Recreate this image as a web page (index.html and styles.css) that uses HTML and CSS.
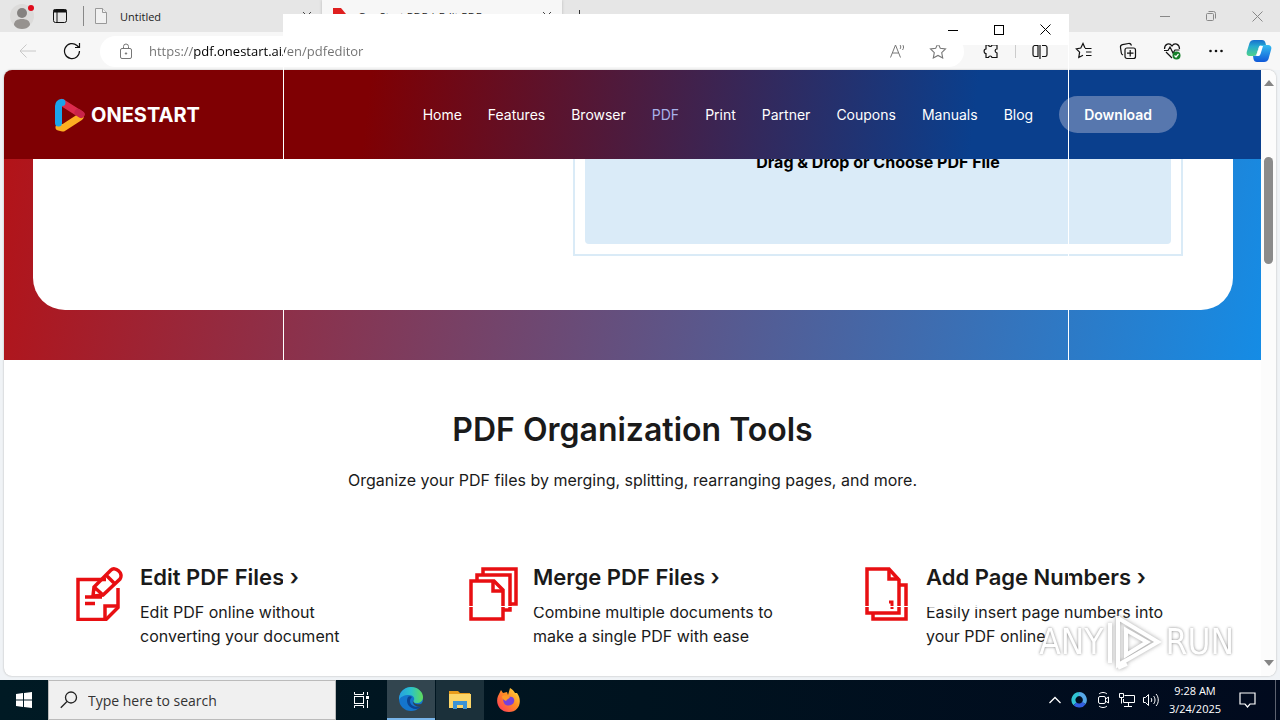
FILE: index.html
```html
<!DOCTYPE html>
<html lang="en">
<head>
    <meta charset="UTF-8">
    <meta name="viewport" content="width=device-width, initial-scale=1.0">
    <title>OneStart PDF | Edit PDF</title>
    <link rel="stylesheet" href="styles.css">
</head>
<body>
    <!-- Tab strip -->
    <div class="tab-strip">
        <button class="profile" aria-label="Profile">
            <svg width="26" height="26" viewBox="0 0 26 26"><circle cx="13" cy="13" r="12" fill="#dcdbda"/><circle cx="13" cy="10" r="5" fill="#858280"/><path d="M5 22c0-4 3-6 8-6s8 2 8 6c-2 3-5 4-8 4s-6-1-8-4z" fill="#96928f"/><circle cx="22" cy="5" r="3" fill="#e00b1c"/></svg>
        </button>
        <button class="workspaces" aria-label="Tab actions">
            <svg width="16" height="16" viewBox="0 0 16 16" fill="none" stroke="#111"><rect x="1.500" y="1.500" width="13" height="13" rx="2"/><path d="M1.500 3h13" stroke-width="3"/><path d="M5 4v10"/></svg>
        </button>
        <span class="strip-line"></span>
        <div class="tab">
            <svg width="14" height="18" viewBox="0 0 14 18" fill="#f1f1f1" stroke="#999"><path d="M1.500 1.500h7l4 4v11h-11z"/><path d="M8.500 1.500v4h4"/></svg>
            <span>Untitled</span>
            <button class="tab-close" aria-label="Close tab"><svg width="10" height="10" viewBox="0 0 10 10" stroke="#444"><path d="M1 1l8 8M9 1l-8 8"/></svg></button>
        </div>
        <div class="tab active">
            <svg width="14" height="16" viewBox="0 0 14 16"><path d="M1 0h8l5 6v10H1z" fill="#df1f1f"/></svg>
            <span>OneStart PDF | Edit PDF</span>
            <button class="tab-close" aria-label="Close tab"><svg width="10" height="10" viewBox="0 0 10 10" stroke="#444"><path d="M1 1l8 8M9 1l-8 8"/></svg></button>
        </div>
        <button class="new-tab" aria-label="New tab"><svg width="14" height="14" viewBox="0 0 14 14" stroke="#333"><path d="M7.500 1v13M1 7.500h13"/></svg></button>
        <div class="window-buttons muted">
            <button aria-label="Minimize"><svg width="10" height="10" viewBox="0 0 10 10" stroke="currentColor"><path d="M0 5.500h10"/></svg></button>
            <button aria-label="Restore"><svg width="10" height="10" viewBox="0 0 10 10" fill="none" stroke="currentColor"><rect x=".5" y="2.500" width="7" height="7" rx="1"/><path d="M2.500 .5h5a2 2 0 0 1 2 2v5"/></svg></button>
            <button aria-label="Close"><svg width="11" height="11" viewBox="0 0 11 11" stroke="currentColor"><path d="M.5 .5l10 10M10.500 .5l-10 10"/></svg></button>
        </div>
    </div>

    <!-- Toolbar -->
    <div class="toolbar">
        <button class="nav-button" aria-label="Back"><svg width="18" height="14" viewBox="0 0 18 14" fill="none" stroke="#c8c8c8"><path d="M7.500 .5L1 7l6.500 6.500M1 7h16"/></svg></button>
        <button class="nav-button" aria-label="Refresh"><svg width="18" height="18" viewBox="0 0 18 18" fill="none" stroke="#111" stroke-width="1.200"><path d="M16.500 9A7.500 7.500 0 1 1 14 3.500l2 2M16.500 1v4.500H12"/></svg></button>
        <div class="address-bar">
            <svg width="14" height="16" viewBox="0 0 14 16" fill="none" stroke="#777"><rect x="1.500" y="5.500" width="11" height="10" rx="1.500"/><path d="M4.500 5.500V3.500a2.500 2.500 0 0 1 5 0v2"/><circle cx="7" cy="10.500" r=".7" fill="#555"/></svg>
            <input type="text" class="url" aria-label="Address" value="https://pdf.onestart.ai/en/pdfeditor">
            <button aria-label="Read aloud"><svg width="18" height="16" viewBox="0 0 18 16" fill="none" stroke="#777"><path d="M1.500 14.500L6.500 2l5 12.500M3.300 10h6.500M11 2c1 1 1 3 0 4M13 1c2 2 2 4 .5 6"/></svg></button>
            <button aria-label="Add to favorites"><svg width="18" height="18" viewBox="0 0 18 18" fill="none" stroke="#777" stroke-width="1.100"><path d="M9 1.500l2.300 4.800 5.200.7-3.800 3.600 1 5.400L9 13.400 4.300 16l1-5.400L1.500 7l5.200-.7z"/></svg></button>
        </div>
        <div class="actions">
            <button aria-label="Extensions"><svg width="16" height="16" viewBox="0 0 16 16" fill="none" stroke="#111" stroke-width="1.200"><path d="M3 2h2.500c.5 2 3 2 3.500 0h5v4c-2 0-3 3 0 4v4.500H9c-.5-2-3-2-3.500 0H3V10.500C.5 10.500.5 6 3 6z"/></svg></button>
            <span class="separator"></span>
            <button aria-label="Split screen"><svg width="16" height="16" viewBox="0 0 16 16" fill="none" stroke="#111" stroke-width="1.200"><path d="M6 2.500H2.500a2 2 0 0 0-1.500 2v7a2 2 0 0 0 1.500 2H6zM10 2.500h3.500a2 2 0 0 1 1.500 2v7a2 2 0 0 1-1.500 2H10M8 0v16"/></svg></button>
            <button aria-label="Favorites"><svg width="18" height="18" viewBox="0 0 18 18" fill="none" stroke="#111" stroke-width="1.200"><path d="M10 6L8 1.500 5.800 6l-4.500.8 3.300 3.400-.8 5.300 4.200-2.300M10 6.500h6.500M11 10h5.500M11 13.500h5.500"/></svg></button>
            <button aria-label="Collections"><svg width="18" height="18" viewBox="0 0 18 18" fill="none" stroke="#111" stroke-width="1.200"><rect x="6" y="6" width="10.500" height="10.500" rx="2"/><path d="M11.200 8v6.500M8 11.200h6.500M4 13c-1-.5-1.500-1-1.700-2L1.500 5.500c-.3-1.500.5-2.500 2-2.800l6-1.200c1.500-.2 2.500.5 3 2"/></svg></button>
            <button aria-label="Browser essentials"><svg width="18" height="18" viewBox="0 0 18 18" fill="none" stroke="#111" stroke-width="1.200"><path d="M9 16L3 10M1.500 7c0-5 5-7 7.500-3 2.500-4 7.500-2 7.500 3M1 8.500h4L7 5l3 6 2-3h4.500"/><circle cx="13.500" cy="13.500" r="4" fill="#16802a" stroke="none"/><path d="M11.500 13.500l1.500 1.500 2.500-3" stroke="#fff"/></svg></button>
            <button aria-label="Settings and more"><svg width="16" height="16" viewBox="0 0 16 16" fill="#111"><circle cx="2.500" cy="8" r="1.300"/><circle cx="8" cy="8" r="1.300"/><circle cx="13.500" cy="8" r="1.300"/></svg></button>
            <button class="copilot" aria-label="Copilot">
                <svg width="26" height="24" viewBox="0 0 26 24">
                    <defs>
                        <linearGradient id="copilot-left" x1="0" y1="0" x2="0" y2="1"><stop offset="0" stop-color="#176fce"/><stop offset=".4" stop-color="#26a9cf"/><stop offset="1" stop-color="#4fd28b"/></linearGradient>
                        <linearGradient id="copilot-right" x1="0" y1="0" x2="0" y2="1"><stop offset="0" stop-color="#35bdf0"/><stop offset="1" stop-color="#0f58d8"/></linearGradient>
                    </defs>
                    <path d="M8 1h8c2 0 3 1 3.500 3l.5 2h-4c-2 0-3 1-3.500 3l-1.500 5c-.5 2-1.500 3-3.500 3H4c-3 0-4-2-3-5l2.500-8C4.300 2 5.500 1 8 1z" fill="url(#copilot-left)"/>
                    <path d="M18 23h-7c-2 0-3-1-3.500-3L7 17h1c2 0 3-1 3.500-3L13 9c.5-2 1.500-3 3.500-3H21c4 0 5 2 4 5l-2.500 9c-.8 2-2 3-4.500 3z" fill="url(#copilot-right)"/>
                    <path d="M13.500 7L10 17h2.500c1 0 1.500-1 2-2L17 7z" fill="#fff"/>
                </svg>
            </button>
        </div>
    </div>

    <!-- Web page -->
    <div class="viewport">
        <div class="page">
            <header class="site-header">
                <a href="#" class="logo">
                    <svg width="32" height="34" viewBox="0 0 32 34" fill="none" stroke-width="7" stroke-linecap="round" stroke-linejoin="round">
                        <path d="M8 4.500l19 12" stroke="#dc2b4d"/>
                        <path d="M5 29l4 1 17-11" stroke="#fdae22"/>
                        <path d="M27 16.500l-3-2" stroke="#c9234a"/>
                        <path d="M8 4.500C5.500 4.500 4.500 6 4.500 8v17" stroke="#1ba4ea"/>
                    </svg>
                    <span>ONESTART</span>
                </a>
                <nav class="main-nav">
                    <a href="#">Home</a>
                    <a href="#">Features</a>
                    <a href="#">Browser</a>
                    <a href="#" class="current">PDF</a>
                    <a href="#">Print</a>
                    <a href="#">Partner</a>
                    <a href="#">Coupons</a>
                    <a href="#">Manuals</a>
                    <a href="#">Blog</a>
                    <a href="#" class="download">Download</a>
                </nav>
            </header>

            <section class="hero">
                <div class="hero-card">
                    <div class="drop-frame">
                        <button class="drop-zone">Drag &amp; Drop or Choose PDF File</button>
                    </div>
                </div>
            </section>

            <section class="organize">
                <h2>PDF Organization Tools</h2>
                <p class="intro">Organize your PDF files by merging, splitting, rearranging pages, and more.</p>
                <div class="tools">
                    <article class="tool">
                        <svg width="54" height="54" viewBox="0 0 54 54" fill="none" stroke="#e80f12" stroke-width="3.500">
                            <path d="M33 12.500H5v40h28l12-12V21"/>
                            <path d="M32 52V39h13M12 30h17M12 36.500h10"/>
                            <path d="M20 29l1-9L38 3c4-4 13 3 9 9L30 28l-9 1zM21 20l9 8M33 8l9 9"/>
                        </svg>
                        <div>
                            <h3><a href="#">Edit PDF Files ›</a></h3>
                            <p>Edit PDF online without converting your document</p>
                        </div>
                    </article>
                    <article class="tool">
                        <svg width="54" height="54" viewBox="0 0 54 54" fill="none" stroke="#e80f12" stroke-width="3.500">
                            <path d="M17 8V2h33v35h-7"/>
                            <path d="M11 14V8h33v35h-7"/>
                            <path d="M5 14h23l9 9v29H5z"/>
                            <path d="M27 14v10h10"/>
                        </svg>
                        <div>
                            <h3><a href="#">Merge PDF Files ›</a></h3>
                            <p>Combine multiple documents to make a single PDF with ease</p>
                        </div>
                    </article>
                    <article class="tool">
                        <svg width="54" height="54" viewBox="0 0 54 54" fill="none" stroke="#e80f12" stroke-width="3.500">
                            <path d="M8 2h22l10 11v33H8z"/>
                            <path d="M30 2v10h10M41 18h6v34H14v-6"/>
                            <path d="M30 35h3v7" stroke-width="3"/>
                        </svg>
                        <div>
                            <h3><a href="#">Add Page Numbers ›</a></h3>
                            <p>Easily insert page numbers into your PDF online</p>
                        </div>
                    </article>
                </div>
            </section>
        </div>
        <div class="scrollbar">
            <svg width="10" height="6" viewBox="0 0 10 6" fill="#858585"><path d="M0 6l5-6 5 6z"/></svg>
            <div class="scroll-track"><div class="scroll-thumb"></div></div>
            <svg width="10" height="6" viewBox="0 0 10 6" fill="#858585"><path d="M0 0l5 6 5-6z"/></svg>
        </div>
    </div>

    <!-- Taskbar -->
    <div class="taskbar">
        <button class="start" aria-label="Start"><svg width="16" height="16" viewBox="0 0 16 16" fill="#fff"><path d="M0 2l7-1v6.500H0zM8 1l8-1v7.500H8zM0 8.500h7V15l-7-1zM8 8.500h8V16l-8-1z"/></svg></button>
        <label class="search">
            <svg width="18" height="18" viewBox="0 0 18 18" fill="none" stroke="#222" stroke-width="1.300"><circle cx="11" cy="6.500" r="5.500"/><path d="M7 10.500L.8 16.700"/></svg>
            <input type="text" placeholder="Type here to search" aria-label="Type here to search">
        </label>
        <button class="task" aria-label="Task view"><svg width="18" height="16" viewBox="0 0 18 16" fill="none" stroke="#fff"><path d="M1.500 0v2.500h9V0M1.500 16v-2.500h9V16M14.500 0v3M14.500 8v8"/><rect x="1.500" y="4.500" width="9" height="7"/><path d="M13 5.500h3" stroke-width="3"/></svg></button>
        <button class="task focused" aria-label="Microsoft Edge">
            <svg width="24" height="24" viewBox="0 0 24 24">
                <defs>
                    <linearGradient id="edge-top" x1="0" y1="0" x2="1" y2="0"><stop offset="0" stop-color="#269fe2"/><stop offset=".5" stop-color="#2bc2c9"/><stop offset="1" stop-color="#60dc58"/></linearGradient>
                </defs>
                <circle cx="12" cy="12" r="12" fill="#1475cd"/>
                <path d="M0 11C1 4 6 0 12 0c7 0 12 5 12 10 0 4-3 6-6 6-4 0-4-2-3-3 1-2-1-5-5-5-5 0-9 2-10 5z" fill="url(#edge-top)"/>
                <path d="M9 10c-3 5 1 12 8 12 2 0 4-1 5-3-5 2-11 0-11-5 0-2 1-3 2-4-1-1-3-1-4 0z" fill="#0b4593"/>
                <path d="M14 13c0 4 4 5 8 4l2-2v4l-2 1c-6 0-9-3-8-7z" fill="#32454f"/>
            </svg>
        </button>
        <button class="task open" aria-label="File Explorer"><svg width="22" height="20" viewBox="0 0 22 20"><path d="M0 1h9l2 2h10v4H0z" fill="#e99c1b"/><path d="M0 4h22v14H0z" fill="#fcd568"/><path d="M4 19v-8h14v8h-4v-4H8v4z" fill="#3b93d4"/></svg></button>
        <button class="task" aria-label="Firefox">
            <svg width="24" height="24" viewBox="0 0 24 24">
                <defs>
                    <linearGradient id="fox" x1="1" y1="0" x2="0" y2="1"><stop offset="0" stop-color="#ffe642"/><stop offset=".45" stop-color="#ff8d24"/><stop offset="1" stop-color="#ff2f5f"/></linearGradient>
                </defs>
                <path d="M1 8l3-6 2 3 4-1 1 3 2-7c3 2 4 3 5 5l2 0c6 8 2 19-8 19C3 24-2 16 1 8z" fill="url(#fox)"/>
                <path d="M6 9c2 1 4 0 6 0 4-1 6 2 5 5-1 4-8 5-10 1-1-2-1-4-1-6z" fill="#7541db"/>
                <path d="M5 8c3-2 5 0 8 1-1 2-3 2-4 4-3-1-4-3-4-5z" fill="#ff9a28"/>
            </svg>
        </button>
        <div class="tray">
            <button aria-label="Show hidden icons"><svg width="12" height="8" viewBox="0 0 12 8" fill="none" stroke="#fff" stroke-width="1.300"><path d="M.5 7L6 1.500 11.500 7"/></svg></button>
            <button aria-label="OneStart"><svg width="16" height="16" viewBox="0 0 16 16" fill="none" stroke-width="4"><path d="M8 2a6 6 0 0 0-4 10" stroke="#30c3d3"/><path d="M4 12a6 6 0 0 0 9-1" stroke="#315ee0"/><path d="M8 2a6 6 0 0 1 5 9" stroke="#56a8e8"/></svg></button>
            <button aria-label="Meet now"><svg width="12" height="16" viewBox="0 0 12 16" fill="none" stroke="#fff"><rect x="1.500" y="4.500" width="7" height="7" rx="1.500"/><path d="M8.500 7l3-2v6l-3-2M2 2c2-2 6-2 8 0M2 14c2 2 6 2 8 0"/></svg></button>
            <button aria-label="Network"><svg width="16" height="14" viewBox="0 0 16 14" fill="none" stroke="#fff"><path d="M5.500 2.500h10v7h-11V6M9.500 9.500v4M5 13.500h8M.5 .5h4v4h-4zM2.500 4.500v6"/></svg></button>
            <button aria-label="Volume"><svg width="16" height="14" viewBox="0 0 16 14" fill="none" stroke="#fff"><path d="M.5 4.500h2l3-3v11l-3-3h-2zM8 5c1 1 1 3 0 4M10.500 3c2 2 2 6 0 8M13 1c3 3 3 9 0 12"/></svg></button>
            <div class="clock"><span>9:28 AM</span><span>3/24/2025</span></div>
            <button class="notifications" aria-label="Notifications"><svg width="17" height="17" viewBox="0 0 17 17" fill="none" stroke="#fff" stroke-width="1.200"><path d="M1 1h15v11h-5l-2.500 3L6 12H1z"/></svg></button>
            <span class="show-desktop"></span>
        </div>
    </div>

    <!-- Second window, not painted yet -->
    <div class="ghost-window">
        <div class="window-buttons">
            <button aria-label="Minimize"><svg width="10" height="10" viewBox="0 0 10 10" stroke="currentColor"><path d="M0 5.500h10"/></svg></button>
            <button aria-label="Maximize"><svg width="10" height="10" viewBox="0 0 10 10" fill="none" stroke="currentColor"><rect x=".5" y=".5" width="9" height="9"/></svg></button>
            <button aria-label="Close"><svg width="11" height="11" viewBox="0 0 11 11" stroke="currentColor"><path d="M.5 .5l10 10M10.500 .5l-10 10"/></svg></button>
        </div>
    </div>

    <div class="watermark">
        <span>ANY</span>
        <svg width="56" height="60" viewBox="0 0 56 60" fill="none" stroke="#fff" stroke-width="4"><path d="M3 11v40M11 4v49l40-23L11 6M19 18v25l21-13zM11 56l9-4"/></svg>
        <span>RUN</span>
    </div>
</body>
</html>
```
FILE: styles.css
```css
* {
    box-sizing: border-box;
    margin: 0;
    padding: 0;
}
body {
    display: flex;
    flex-direction: column;
    height: 100vh;
    overflow: hidden;
    font-family: "Open Sans", sans-serif;
    font-size: 12px;
    color: #222;
    background-color: #f0f3f6;
}
button {
    display: flex;
    align-items: center;
    justify-content: center;
    border: none;
    background: none;
    font: inherit;
    color: inherit;
}
input {
    border: none;
    outline: none;
    background: none;
    font: inherit;
}
a {
    color: inherit;
    text-decoration: none;
}
svg {
    flex-shrink: 0;
}

/* Tab strip */
.tab-strip {
    display: flex;
    align-items: stretch;
    height: 32px;
    flex-shrink: 0;
    background-color: #e6e6e6;
}
.profile {
    width: 44px;
}
.workspaces {
    width: 32px;
}
.strip-line {
    width: 1px;
    margin: 6px 0 6px 7px;
    background-color: #888;
}
.tab {
    display: flex;
    align-items: center;
    gap: 12px;
    width: 238px;
    padding: 0 10px;
    font-size: 11px;
}
.tab.active {
    width: 240px;
    background-color: #f7f7f7;
    box-shadow: 0 0 3px #bbb;
}
.tab-close {
    margin-left: auto;
}
.new-tab {
    width: 34px;
}
.window-buttons {
    display: flex;
    margin-left: auto;
    color: #000;
}
.window-buttons button {
    width: 46px;
}
.window-buttons.muted {
    color: #888;
}

/* Toolbar */
.toolbar {
    display: flex;
    align-items: center;
    height: 38px;
    flex-shrink: 0;
    padding-left: 6px;
    background-color: #f7f7f7;
}
.nav-button {
    width: 44px;
}
.address-bar {
    display: flex;
    flex: 1;
    align-items: center;
    height: 31px;
    margin: 0 5px 0 6px;
    padding: 0 6px 0 19px;
    border-radius: 16px;
    background-color: #fff;
}
.address-bar button {
    width: 40px;
}
.url {
    flex: 1;
    margin-left: 16px;
    color: transparent;
    font-size: 13px;
    /* host part is darker than the rest of the address */
    background: linear-gradient(90deg, #707070 45px, #000 45px, #000 136px, #707070 136px);
    -webkit-background-clip: text;
    background-clip: text;
}
.actions {
    display: flex;
    align-items: center;
}
.actions button {
    width: 44px;
}
.actions .copilot {
    width: 42px;
}
.separator {
    width: 1px;
    height: 14px;
    margin: 0 2px;
    background-color: #ccc;
}

/* Web page */
.viewport {
    display: flex;
    flex: 1;
    min-height: 0;
    margin: 0 4px 4px;
    overflow: hidden;
    border-radius: 8px;
    background-color: #fff;
    box-shadow: 0 0 2px #aaa;
}
.page {
    flex: 1;
    overflow: hidden;
    font-family: Inter, sans-serif;
    color: #1a1a1a;
}
.site-header {
    position: relative;
    z-index: 1;
    display: flex;
    align-items: center;
    justify-content: space-between;
    height: 89px;
    padding: 0 84px 0 50px;
    background: linear-gradient(97deg, #7f0003 29%, #0a3f8d 77%);
    color: #fff;
}
.logo {
    display: flex;
    align-items: center;
    gap: 5px;
    font-size: 20px;
    font-weight: 700;
}
.main-nav {
    display: flex;
    align-items: center;
    gap: 26px;
    font-size: 14px;
}
.main-nav .current {
    color: #a8b1ea;
}
.main-nav .download {
    padding: 0 25px;
    border-radius: 20px;
    background-color: #5777ae;
    font-weight: 600;
    line-height: 37px;
}
.hero {
    margin-top: -8px;
    padding: 0 28px 50px 29px;
    background: linear-gradient(100deg, #b31318, #158ce5);
}
.hero-card {
    padding: 0 50px 54px;
    border-radius: 0 0 32px 32px;
    background-color: #fff;
}
.drop-frame {
    width: 610px;
    max-width: 100%;
    margin-left: auto;
    padding: 0 10px 10px;
    border: 2px solid #daebf7;
    border-top: none;
}
.drop-zone {
    width: 100%;
    padding-bottom: 71px;
    border-radius: 0 0 4px 4px;
    background-color: #daebf8;
    color: #000;
    font-size: 16px;
    font-weight: 700;
    line-height: 22px;
}
.organize {
    padding: 50px 39px;
    text-align: center;
}
.organize h2 {
    font-size: 32px;
    font-weight: 600;
    line-height: 40px;
}
.intro {
    margin-top: 18px;
    font-size: 16px;
    line-height: 24px;
}
.tools {
    display: grid;
    grid-template-columns: repeat(3, 1fr);
    margin-top: 73px;
    text-align: left;
}
.tool {
    display: flex;
    gap: 13px;
    padding: 0 40px 0 30px;
}
.tool svg {
    margin-top: 2px;
}
.tool h3 {
    font-size: 22px;
    font-weight: 600;
    line-height: 24px;
}
.tool p {
    margin-top: 11px;
    font-size: 16px;
    line-height: 24px;
}
.scrollbar {
    display: flex;
    flex-direction: column;
    align-items: center;
    width: 15px;
    padding: 10px 0;
    background-color: #fcfcfc;
}
.scroll-track {
    flex: 1;
    padding-top: 71px;
}
.scroll-thumb {
    width: 9px;
    height: 107px;
    border-radius: 5px;
    background-color: #8b8b8b;
}

/* Taskbar */
.taskbar {
    display: flex;
    height: 40px;
    flex-shrink: 0;
    background: linear-gradient(90deg, #001a24, #00131f 50%, #010a1e);
    color: #fff;
}
.start {
    width: 48px;
}
.search {
    display: flex;
    align-items: center;
    gap: 10px;
    width: 288px;
    margin-right: 2px;
    padding: 0 11px;
    border: 1px solid #bbb;
    background-color: #f0f0f0;
}
.search input {
    flex: 1;
    font-size: 14px;
}
.search input::placeholder {
    color: #333;
}
.task {
    width: 48px;
    margin-right: 1px;
}
.task.focused {
    border-bottom: 2px solid #78b5ea;
    background-color: #32454f;
}
.task.open {
    background-color: #1b303a;
}
.tray {
    display: flex;
    margin-left: auto;
}
.tray button {
    width: 24px;
}
.clock {
    display: flex;
    flex-direction: column;
    justify-content: center;
    width: 64px;
    text-align: center;
    font-size: 11px;
    line-height: 18px;
}
.tray .notifications {
    width: 40px;
}
.show-desktop {
    width: 5px;
    margin-left: 8px;
    border-left: 1px solid #5d6270;
}

/* Things lying over the browser */
.ghost-window {
    position: absolute;
    z-index: 2;
    top: 14px;
    left: 283px;
    width: 786px;
    height: 593px;
    border: 1px solid #fff;
    border-top: none;
    pointer-events: none;
}
.ghost-window .window-buttons {
    justify-content: flex-end;
    height: 31px;
    background-color: #fff;
}
.watermark {
    position: absolute;
    z-index: 3;
    right: 46px;
    bottom: 48px;
    display: flex;
    align-items: center;
    gap: 3px;
    color: #fff;
    font-family: "DejaVu Sans Condensed", sans-serif;
    font-size: 35px;
    line-height: 60px;
    text-shadow: 0 0 3px #777;
    opacity: 0.9;
}
.watermark svg {
    filter: drop-shadow(0 0 2px #999);
}
```
